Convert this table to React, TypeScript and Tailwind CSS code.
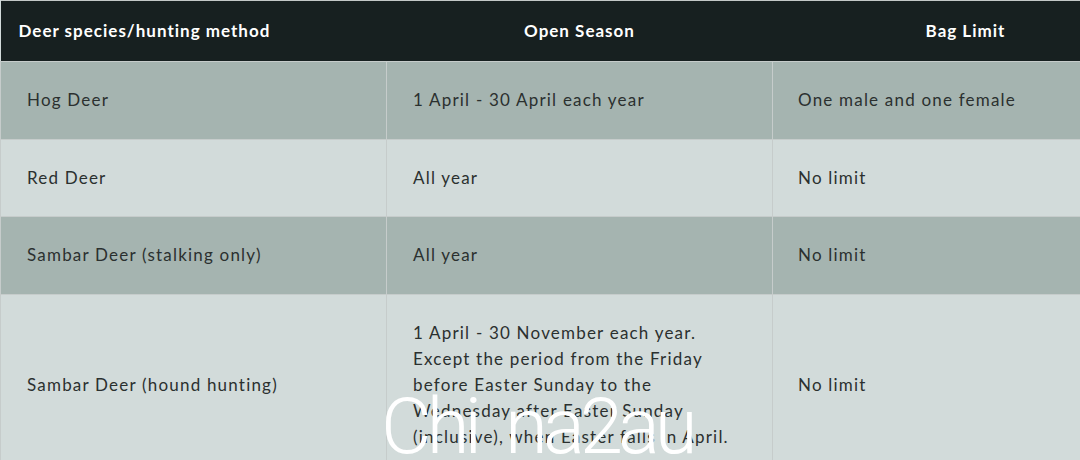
import React from 'react';

interface DeerRow {
  species: string;
  season: string;
  limit: string;
}

const rows: DeerRow[] = [
  { species: 'Hog Deer', season: '1 April - 30 April each year', limit: 'One male and one female' },
  { species: 'Red Deer', season: 'All year', limit: 'No limit' },
  { species: 'Sambar Deer (stalking only)', season: 'All year', limit: 'No limit' },
  {
    species: 'Sambar Deer (hound hunting)',
    season:
      '1 April - 30 November each year. Except the period from the Friday before Easter Sunday to the Wednesday after Easter Sunday (inclusive), when Easter falls in April.',
    limit: 'No limit',
  },
];

export default function App() {
  return (
    <div className="relative w-[1080px] h-[460px] overflow-hidden bg-[#d2dbda]" style={{ fontFamily: 'Lato, "Open Sans", sans-serif' }}>
      <table className="w-[1158px] table-fixed border-collapse border-t border-[#c3c8c7]">
        <thead>
          <tr className="bg-[#172020] text-white h-[61px] tracking-[1px]">
            <th className="w-[386px] pl-[18px] text-left font-bold text-[17px]">Deer species/hunting method</th>
            <th className="w-[386px] text-center font-bold text-[17px]">Open Season</th>
            <th className="w-[386px] text-center font-bold text-[17px]">Bag Limit</th>
          </tr>
        </thead>
        <tbody>
          {rows.map((row, i) => (
            <tr
              key={row.species}
              className={`${i % 2 === 0 ? 'bg-[#a5b4b0]' : 'bg-[#d2dbda]'} h-[77.6px] text-[#2b302f] text-[17px] leading-[26px] tracking-[1.2px] align-middle`}
            >
              <td className="border border-[#c6cccb] pl-[26px] pr-6 py-[25px]">{row.species}</td>
              <td className="border border-[#c6cccb] pl-[26px] pr-[40px] py-[25px]">{row.season}</td>
              <td className="border border-[#c6cccb] pl-[25px] pr-6 py-[25px]">{row.limit}</td>
            </tr>
          ))}
        </tbody>
      </table>

      {/* watermark */}
      <div
        className="absolute left-[381px] top-[388px] text-white text-[78px] font-light leading-none tracking-[-5px] [word-spacing:14px] whitespace-nowrap pointer-events-none"
        style={{ fontFamily: 'Roboto, sans-serif' }}
      >
        Chi na2au
      </div>
    </div>
  );
}
